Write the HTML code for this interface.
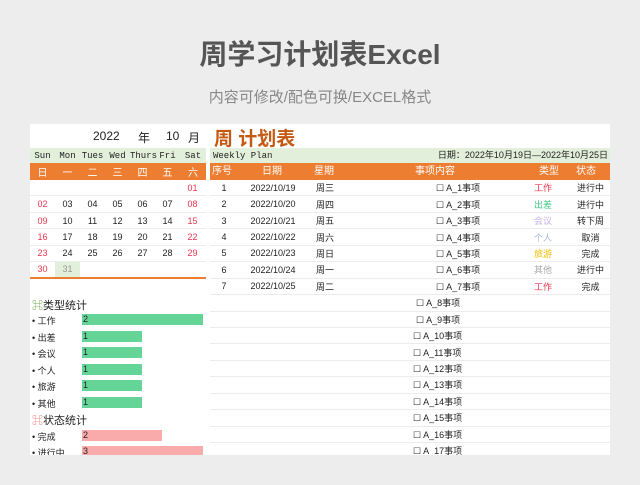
<!DOCTYPE html>
<html><head><meta charset="utf-8">
<style>
*{margin:0;padding:0;box-sizing:border-box}
body{width:640px;height:485px;background:#ededed;font-family:"Liberation Sans","Noto Sans CJK SC",sans-serif;position:relative;overflow:hidden;color:#222}
.a{position:absolute}
#t1{left:0;width:640px;top:33px;text-align:center;font-size:28px;color:#555;font-weight:bold}
#t2{left:0;width:640px;top:86px;text-align:center;font-size:15px;color:#888}
#sheet{left:30px;top:124px;width:580px;height:331px;background:#fff;overflow:hidden}
.row{display:flex;height:16.45px;align-items:center;font-size:9px;border-bottom:1px solid #ececec}
.row div{text-align:center}
.cal div{width:25px;text-align:center}
.red{color:#e8344d}
.bar{position:absolute;height:11px;font-size:9px;line-height:11px;padding-left:1px}
.g{background:#64d597}.p{background:#f9aaaa}
.stat{position:absolute;left:2px;font-size:9px}
</style></head><body>
<div class="a" id="t1">周学习计划表Excel</div>
<div class="a" id="t2">内容可修改/配色可换/EXCEL格式</div>
<div class="a" id="sheet">
 <div class="a" style="left:63px;top:5px;font-size:12px">2022</div>
 <div class="a" style="left:108px;top:5px;font-size:12px">年</div>
 <div class="a" style="left:136px;top:5px;font-size:12px">10</div>
 <div class="a" style="left:158px;top:5px;font-size:12px">月</div>
 <div class="a" style="left:0;top:24px;width:176px;height:15px;background:#e2efda;display:flex;align-items:center;font-family:'Liberation Mono',monospace;font-size:9px">
  <div style="width:25px;text-align:center">Sun</div><div style="width:25px;text-align:center">Mon</div><div style="width:25px;text-align:center">Tues</div><div style="width:25px;text-align:center">Wed</div><div style="width:25px;text-align:center">Thurs</div><div style="width:25px;text-align:center">Fri</div><div style="width:26px;text-align:center">Sat</div></div>
 <div class="a" style="left:0;top:39px;width:176px;height:17px;background:#ed7d31;color:#fff;display:flex;align-items:center;font-size:10px">
  <div style="width:25px;text-align:center">日</div><div style="width:25px;text-align:center">一</div><div style="width:25px;text-align:center">二</div><div style="width:25px;text-align:center">三</div><div style="width:25px;text-align:center">四</div><div style="width:25px;text-align:center">五</div><div style="width:26px;text-align:center">六</div></div>
 <div class="a" style="left:0;top:56px;width:176px">
  <div class="row cal"><div></div><div></div><div></div><div></div><div></div><div></div><div class="red">01</div></div>
  <div class="row cal"><div class="red">02</div><div>03</div><div>04</div><div>05</div><div>06</div><div>07</div><div class="red">08</div></div>
  <div class="row cal"><div class="red">09</div><div>10</div><div>11</div><div>12</div><div>13</div><div>14</div><div class="red">15</div></div>
  <div class="row cal"><div class="red">16</div><div>17</div><div>18</div><div>19</div><div>20</div><div>21</div><div class="red">22</div></div>
  <div class="row cal"><div class="red">23</div><div>24</div><div>25</div><div>26</div><div>27</div><div>28</div><div class="red">29</div></div>
  <div class="row cal" style="border-bottom:2px solid #ed7d31"><div class="red">30</div><div style="background:#e2efda;color:#999;height:100%;line-height:15px">31</div></div>
 </div>
 <div class="stat" style="top:173px;font-size:11px"><span style="color:#70ad47">⌘</span>类型统计</div>
 <div class="stat" style="top:190px">• 工作</div><div class="bar g" style="left:52px;top:190px;width:121px">2</div>
 <div class="stat" style="top:207px">• 出差</div><div class="bar g" style="left:52px;top:207px;width:60px">1</div>
 <div class="stat" style="top:223px">• 会议</div><div class="bar g" style="left:52px;top:223px;width:60px">1</div>
 <div class="stat" style="top:240px">• 个人</div><div class="bar g" style="left:52px;top:240px;width:60px">1</div>
 <div class="stat" style="top:256px">• 旅游</div><div class="bar g" style="left:52px;top:256px;width:60px">1</div>
 <div class="stat" style="top:273px">• 其他</div><div class="bar g" style="left:52px;top:273px;width:60px">1</div>
 <div class="stat" style="top:288px;font-size:11px"><span style="color:#f08080">⌘</span>状态统计</div>
 <div class="stat" style="top:306px">• 完成</div><div class="bar p" style="left:52px;top:306px;width:80px">2</div>
 <div class="stat" style="top:322px">• 进行中</div><div class="bar p" style="left:52px;top:322px;width:121px">3</div>
 <div class="a" style="left:184px;top:0px;font-size:19px;font-weight:bold;color:#c65911">周 计划表</div>
 <div class="a" style="left:180px;top:24px;width:400px;height:15px;background:#e2efda;font-size:9px;line-height:15px">
  <span style="font-family:'Liberation Mono',monospace;padding-left:3px">Weekly  Plan</span>
  <span style="position:absolute;right:2px">日期：2022年10月19日—2022年10月25日</span></div>
 <div class="a" style="left:180px;top:39px;width:400px;height:17px;background:#ed7d31;color:#fff;font-size:10px;line-height:17px">
  <span class="a" style="left:2px">序号</span><span class="a" style="left:52px">日期</span><span class="a" style="left:104px">星期</span><span class="a" style="left:205px">事项内容</span><span class="a" style="left:329px">类型</span><span class="a" style="left:366px">状态</span></div>
 <div class="a" style="left:180px;top:56px;width:400px">
  <div class="row"><div style="width:28px">1</div><div style="width:70px">2022/10/19</div><div style="width:40px;text-align:left;padding-left:8px">周三</div><div style="width:165px;text-align:left;padding-left:88px">☐ A_1事项</div><div style="width:60px" class="red">工作</div><div style="width:35px">进行中</div></div>
  <div class="row"><div style="width:28px">2</div><div style="width:70px">2022/10/20</div><div style="width:40px;text-align:left;padding-left:8px">周四</div><div style="width:165px;text-align:left;padding-left:88px">☐ A_2事项</div><div style="width:60px;color:#3ec986">出差</div><div style="width:35px">进行中</div></div>
  <div class="row"><div style="width:28px">3</div><div style="width:70px">2022/10/21</div><div style="width:40px;text-align:left;padding-left:8px">周五</div><div style="width:165px;text-align:left;padding-left:88px">☐ A_3事项</div><div style="width:60px;color:#c9b3e6">会议</div><div style="width:35px">转下周</div></div>
  <div class="row"><div style="width:28px">4</div><div style="width:70px">2022/10/22</div><div style="width:40px;text-align:left;padding-left:8px">周六</div><div style="width:165px;text-align:left;padding-left:88px">☐ A_4事项</div><div style="width:60px;color:#aab8e0">个人</div><div style="width:35px">取消</div></div>
  <div class="row"><div style="width:28px">5</div><div style="width:70px">2022/10/23</div><div style="width:40px;text-align:left;padding-left:8px">周日</div><div style="width:165px;text-align:left;padding-left:88px">☐ A_5事项</div><div style="width:60px;color:#f0c000">旅游</div><div style="width:35px">完成</div></div>
  <div class="row"><div style="width:28px">6</div><div style="width:70px">2022/10/24</div><div style="width:40px;text-align:left;padding-left:8px">周一</div><div style="width:165px;text-align:left;padding-left:88px">☐ A_6事项</div><div style="width:60px;color:#aaa">其他</div><div style="width:35px">进行中</div></div>
  <div class="row"><div style="width:28px">7</div><div style="width:70px">2022/10/25</div><div style="width:40px;text-align:left;padding-left:8px">周二</div><div style="width:165px;text-align:left;padding-left:88px">☐ A_7事项</div><div style="width:60px" class="red">工作</div><div style="width:35px">完成</div></div>
  <div class="row"><div style="width:303px;text-align:left;padding-left:206px">☐ A_8事项</div></div>
  <div class="row"><div style="width:303px;text-align:left;padding-left:206px">☐ A_9事项</div></div>
  <div class="row"><div style="width:303px;text-align:left;padding-left:203px">☐ A_10事项</div></div>
  <div class="row"><div style="width:303px;text-align:left;padding-left:203px">☐ A_11事项</div></div>
  <div class="row"><div style="width:303px;text-align:left;padding-left:203px">☐ A_12事项</div></div>
  <div class="row"><div style="width:303px;text-align:left;padding-left:203px">☐ A_13事项</div></div>
  <div class="row"><div style="width:303px;text-align:left;padding-left:203px">☐ A_14事项</div></div>
  <div class="row"><div style="width:303px;text-align:left;padding-left:203px">☐ A_15事项</div></div>
  <div class="row"><div style="width:303px;text-align:left;padding-left:203px">☐ A_16事项</div></div>
  <div class="row"><div style="width:303px;text-align:left;padding-left:203px">☐ A_17事项</div></div>
 </div>
</div>
</body></html>
